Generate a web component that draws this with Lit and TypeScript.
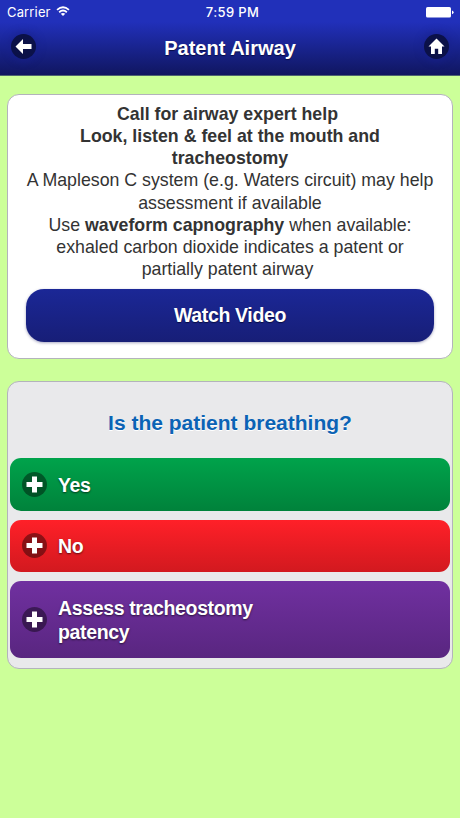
import { LitElement, html, css, svg } from "lit";
import { customElement, property } from "lit/decorators.js";

const wifi = html`<svg class="wifi" width="14" height="11" viewBox="0 0 15 12">
  <g fill="none" stroke="#fff" stroke-width="1.9">
    <path d="M1 4.3Q7.5-1.5 14 4.3" />
    <path d="M3.3 6.8Q7.5 3 11.7 6.8" />
  </g>
  <path d="M7.5 11L5 8.5Q7.5 6.5 10 8.5Z" fill="#fff" />
</svg>`;

const battery = html`<svg class="battery" width="28" height="11" viewBox="0 0 28 11">
  <rect x="0" y="0" width="25" height="10.6" rx="1.6" fill="#fff" />
  <path d="M26 3.4Q27.6 3.7 27.6 5.3T26 7.2Z" fill="#fff" />
</svg>`;

const glyphs = {
  back: svg`<path d="M4.5 12.5L12 5V10H20.5V15H12V20Z" />`,
  home: svg`<path d="M12.5 4.6L20.5 12.6H18V20H14.2V14.8H10.8V20H7V12.6H4.5Z" />`,
  plus: svg`<path d="M10 4.5H15V10H20.5V15H15V20.5H10V15H4.5V10H10Z" />`,
};

@customElement("round-icon")
export class RoundIcon extends LitElement {
  @property() name: keyof typeof glyphs = "plus";
  static styles = css`
    :host { display: block; flex: none; width: 25px; height: 25px; border-radius: 50%; background: rgba(0, 0, 0, 0.42); }
    :host([dark]) { background: #0b1148; box-shadow: 0 0 6px 3px rgba(24, 32, 140, 0.55); }
    svg { display: block; fill: #fff; }
  `;
  render() {
    return html`<svg width="25" height="25" viewBox="0 0 25 25">${glyphs[this.name]}</svg>`;
  }
}

@customElement("app-root")
export class AppRoot extends LitElement {
  static styles = css`
    :host {
      display: block; box-sizing: border-box; height: 100vh; overflow: hidden;
      background: #ccff99; color: #333;
      font-family: "Liberation Sans", Arial, sans-serif;
    }
    * { box-sizing: border-box; }
    header {
      height: 75.5px; border-bottom: 1px solid #4d6470; color: #fff;
      background: linear-gradient(#2130ba 0, #2130ba 22px, #101660 75px);
    }
    .status {
      display: grid; grid-template-columns: 1fr auto 1fr; align-items: center;
      height: 24px; padding: 0 6px 0 7px;
      font-family: Inter, "Liberation Sans", sans-serif; font-size: 13px;
    }
    .carrier { display: flex; align-items: center; gap: 5px; letter-spacing: 0.15px; }
    .wifi { margin-top: -1px; }
    .time { padding-left: 4px; font-weight: 500; letter-spacing: 0.35px; }
    .battery { justify-self: end; }
    .bar { display: flex; align-items: center; justify-content: space-between; height: 44px; padding: 0 11px; }
    h1 { margin: 4px 0 0; font-size: 20px; line-height: 24px; text-shadow: 0 1px 1px #080d45; }
    .card { margin: 0 7px; border: 1px solid #b3b3bb; border-radius: 12px; }
    .info { margin-top: 18.5px; height: 265px; padding: 7.5px 18px 0; background: #fff; text-align: center; }
    .text { margin: 0 -8px; font-size: 17.75px; line-height: 22.25px; white-space: nowrap; }
    .video {
      display: flex; align-items: center; justify-content: center; width: 408px; height: 53px;
      margin: 8.5px 0 0; padding: 0; border: 0; border-radius: 18px; color: #fff;
      background: linear-gradient(#1b2796, #171e77); box-shadow: 0 1px 3px rgba(0, 0, 80, 0.35);
      font: bold 19.5px "Liberation Sans", Arial, sans-serif; letter-spacing: -0.34px; text-shadow: 0 1px 1px #080d45;
    }
    .question { margin-top: 22px; height: 288px; padding: 27px 2px 0; background: #e9e9eb; }
    h2 { margin: 0 0 22px; font-size: 21px; line-height: 27px; text-align: center; color: #0b63b5; text-shadow: 0 1px 0 #fff; }
    .answers { display: flex; flex-direction: column; gap: 9px; }
    .answer {
      display: flex; align-items: center; gap: 11.5px; width: 100%; height: 52.5px; padding: 0 11.5px;
      border: 0; border-radius: 11px; color: #fff; text-align: left;
      font: bold 19.5px/24.5px "Liberation Sans", Arial, sans-serif; letter-spacing: -0.36px;
      text-shadow: 0 1px 2px rgba(0, 0, 0, 0.6);
    }
    .answer span { padding-top: 1px; }
    .yes { background: linear-gradient(#00a34b, #00823b); }
    .no { background: linear-gradient(#ff2028, #d2191f); }
    .assess { height: 77px; background: linear-gradient(#7030a0, #592680); }
  `;

  render() {
    return html`
      <header>
        <div class="status">
          <span class="carrier">Carrier ${wifi}</span>
          <span class="time">7:59 PM</span>
          ${battery}
        </div>
        <div class="bar">
          <round-icon dark name="back"></round-icon>
          <h1>Patent Airway</h1>
          <round-icon dark name="home"></round-icon>
        </div>
      </header>
      <section class="card info">
        <div class="text">
          <b>Call for airway expert help&nbsp;<br />Look, listen &amp; feel at the mouth and<br />tracheostomy</b><br />
          A Mapleson C system (e.g. Waters circuit) may help<br />assessment if available<br />
          Use <b>waveform capnography</b> when available:<br />exhaled carbon dioxide indicates a patent or<br />partially patent airway&nbsp;
        </div>
        <button class="video">Watch Video</button>
      </section>
      <section class="card question">
        <h2>Is the patient breathing?</h2>
        <div class="answers">
          <button class="answer yes"><round-icon></round-icon><span>Yes</span></button>
          <button class="answer no"><round-icon></round-icon><span>No</span></button>
          <button class="answer assess"><round-icon></round-icon><span>Assess tracheostomy<br />patency</span></button>
        </div>
      </section>
    `;
  }
}
